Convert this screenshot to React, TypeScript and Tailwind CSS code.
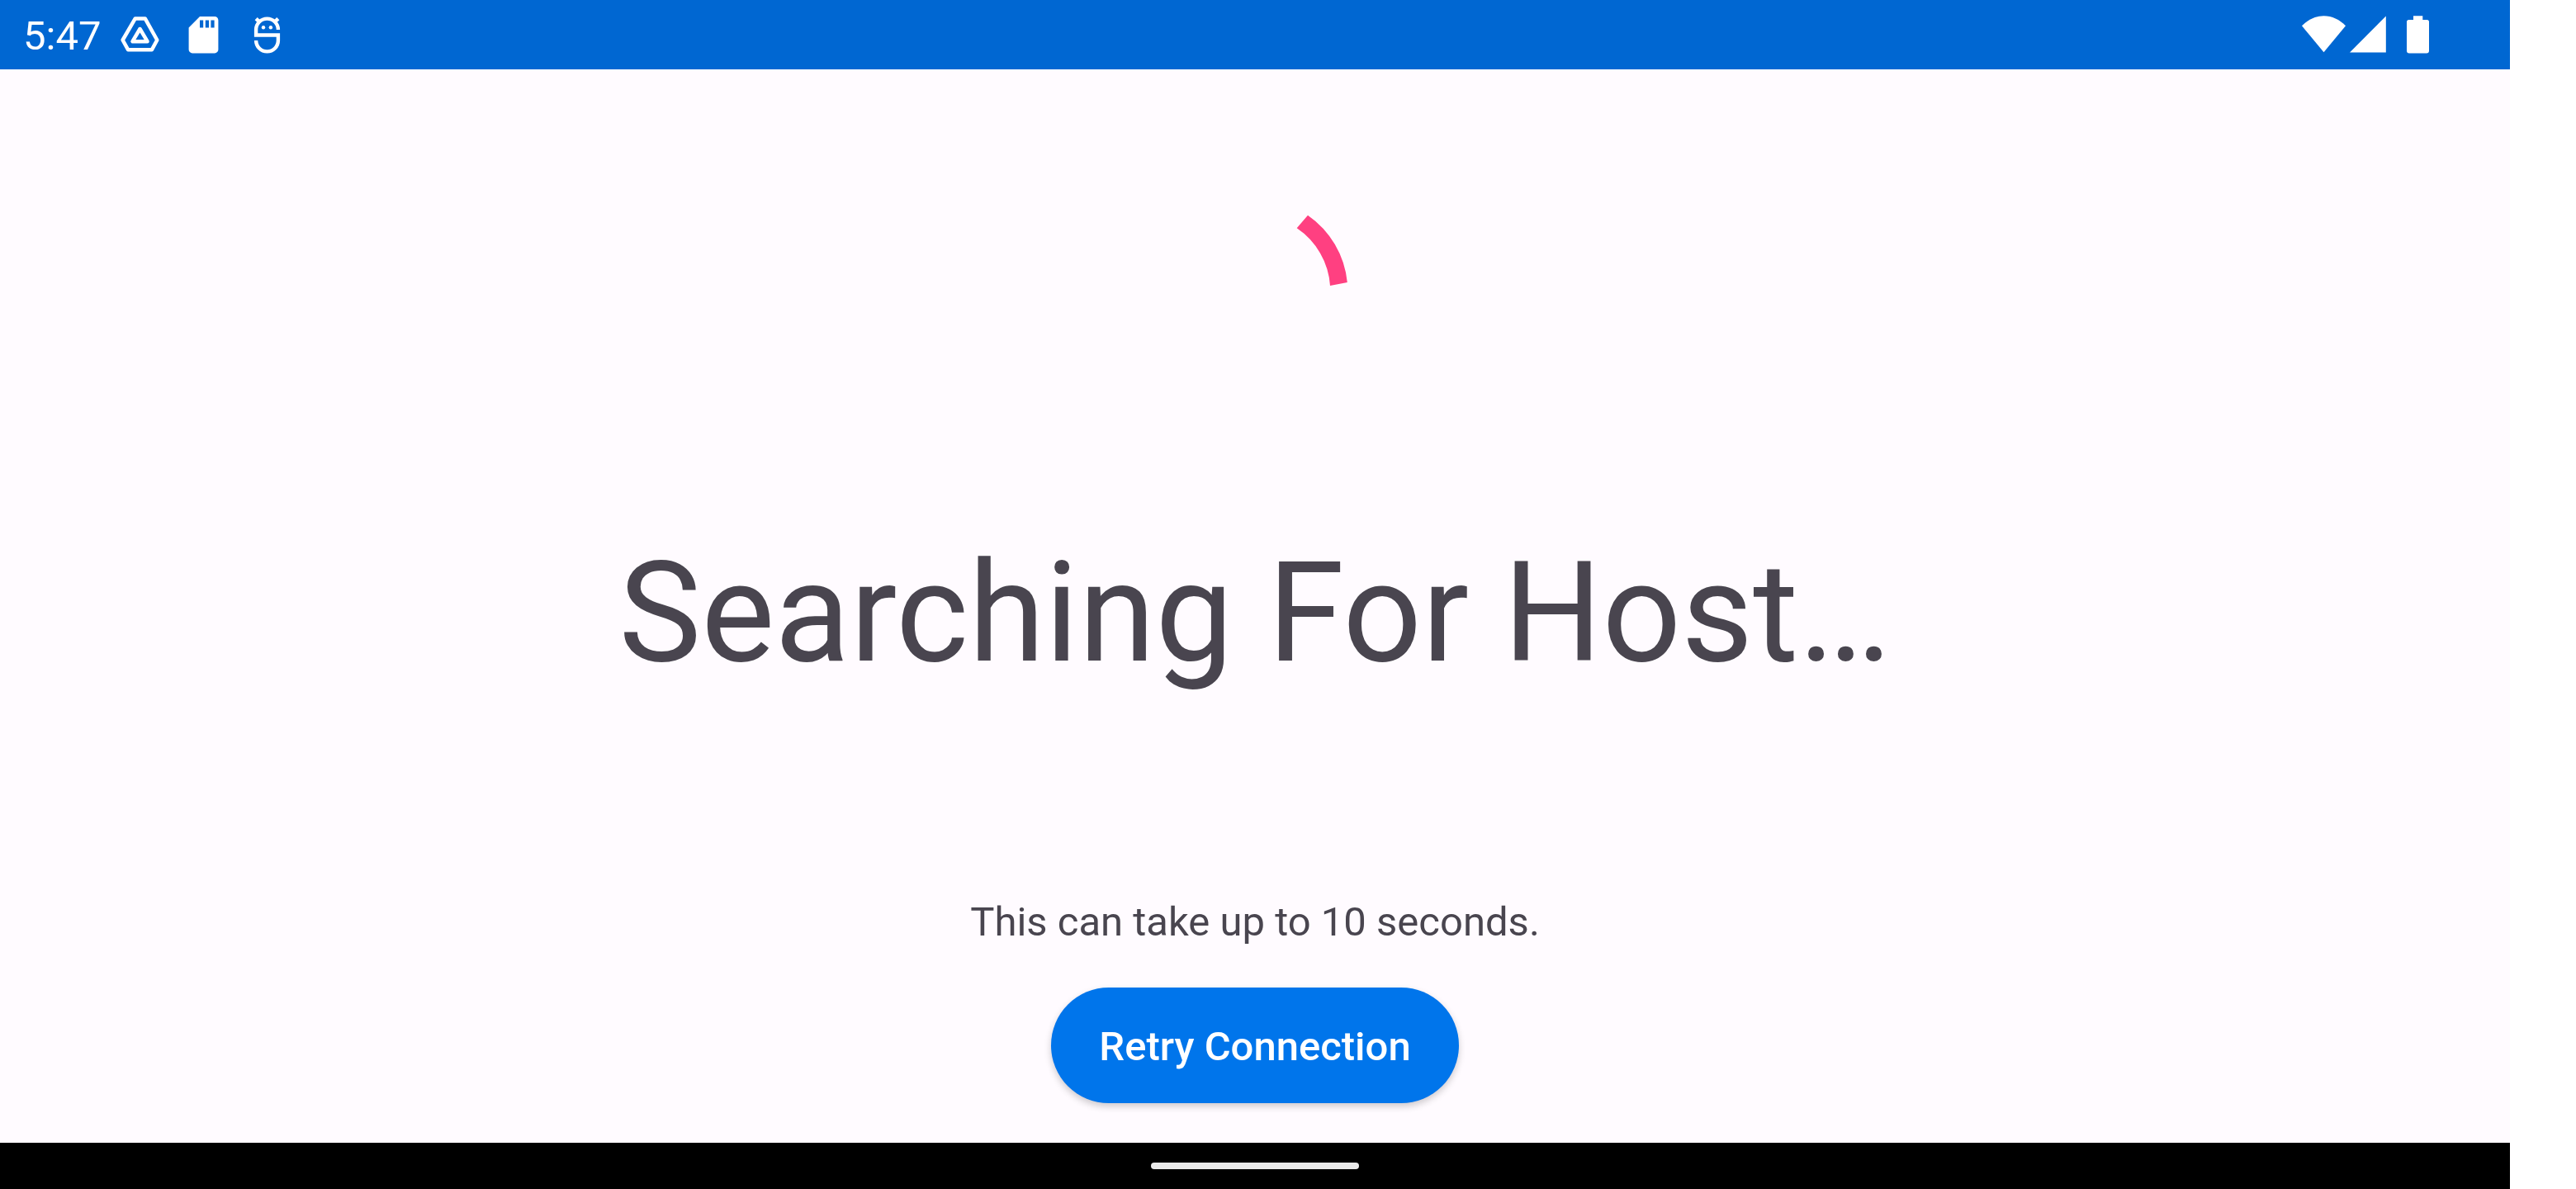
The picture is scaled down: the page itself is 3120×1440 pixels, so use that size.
import React from "react";

function DriveIcon() {
  return (
    <svg aria-hidden="true" className="h-[84px] w-[77px]" viewBox="131 0 77 84" fill="none" stroke="white" strokeWidth="4.5" strokeLinejoin="round">
      <path d="M163.8 22.4H175.7L190.3 48.5L183.8 60.3H155.2L148.6 48.5Z" />
      <path d="M169.5 35L160.5 50.2H178.5Z" />
    </svg>
  );
}

function SdCardIcon() {
  return (
    <svg aria-hidden="true" className="h-[84px] w-[77px]" viewBox="208 0 77 84" fill="white">
      <path
        fillRule="evenodd"
        d="M242 20H260A4.4 4.4 0 0 1 264.4 24.4V60A4.4 4.4 0 0 1 260 64.4H233A4.4 4.4 0 0 1 228.6 60V33.5ZM242 24.6V33.6H246.2V24.6ZM248.8 24.6V33.6H253V24.6ZM255.4 24.6V33.6H259.6V24.6Z"
      />
    </svg>
  );
}

function DroidIcon() {
  return (
    <svg aria-hidden="true" className="h-[84px] w-[77px]" viewBox="285 0 77 84" fill="none" stroke="white" strokeWidth="4.4">
      <path d="M336.9 36A13.4 13.4 0 0 0 310.1 36V42.5H336.9V49A13.4 13.4 0 0 1 310.1 49" />
      <path d="M310.2 22.6L314.2 26.6M336.8 22.6L332.8 26.6" />
      <circle cx="319" cy="33.3" r="2.2" fill="white" stroke="none" />
      <circle cx="327.9" cy="33.3" r="2.2" fill="white" stroke="none" />
    </svg>
  );
}

function StatusBar() {
  return (
    <header className="flex h-[84px] items-center justify-between bg-[#0067d2] pr-[98px] pl-7 text-white">
      <div className="flex items-center">
        <time className="mr-[9px] pt-1 text-[49px] leading-[60px]">5:47</time>
        <DriveIcon />
        <SdCardIcon />
        <DroidIcon />
      </div>
      <div className="flex items-center">
        <svg aria-label="Wi-Fi" className="h-[84px] w-[54px]" viewBox="2788 0 54 84" fill="white">
          <path d="M2814.5 63.3L2788 31.3C2795.5 23.5 2804.5 19.2 2814.5 19.2S2833.5 23.5 2841 31.3Z" />
        </svg>
        <svg aria-label="Signal" className="ml-1 h-[84px] w-11" viewBox="2846 0 44 84" fill="white">
          <path d="M2846 63.6L2889.8 19.5V63.6Z" />
        </svg>
        <svg aria-label="Battery" className="ml-[25px] h-[84px] w-[27px]" viewBox="2915 0 27 84" fill="white">
          <path d="M2923 19.3H2934.3V24H2939.5A2.5 2.5 0 0 1 2942 26.5V61.5A3 3 0 0 1 2939 64.5H2918A3 3 0 0 1 2915 61.5V26.5A2.5 2.5 0 0 1 2917.5 24H2923Z" />
        </svg>
      </div>
    </header>
  );
}

export default function App() {
  return (
    <div className="min-h-screen bg-white pr-20 font-['Roboto',sans-serif]">
      <div className="flex min-h-screen flex-col bg-[#fffbff]">
        <StatusBar />
        <main className="flex flex-1 flex-col items-center pt-[136px] pb-12 text-center text-[#49454f]">
          <svg role="progressbar" aria-label="Searching" className="size-[266px]" viewBox="1387 220 266 266" fill="#ff4081">
            <path d="M1584 260.7A112.3 112.3 0 0 1 1631.8 342L1611 346A91.6 91.6 0 0 0 1570.7 276.3Z" />
          </svg>
          <h1 className="mt-[157px] text-[168px] leading-[200px]">Searching For Host…</h1>
          <p className="mt-auto text-[49px] leading-[60px]">This can take up to 10 seconds.</p>
          <button
            type="button"
            className="mt-[49px] h-[140px] rounded-full bg-[#0075eb] px-[58px] pt-1 text-[49px] leading-[60px] font-medium text-white shadow-[0_4px_8px_rgba(0,0,0,0.2)]"
          >
            Retry Connection
          </button>
        </main>
        <footer className="flex h-14 items-center justify-center bg-black">
          <div className="h-2 w-[252px] rounded-full bg-[#ebebeb]" />
        </footer>
      </div>
    </div>
  );
}
